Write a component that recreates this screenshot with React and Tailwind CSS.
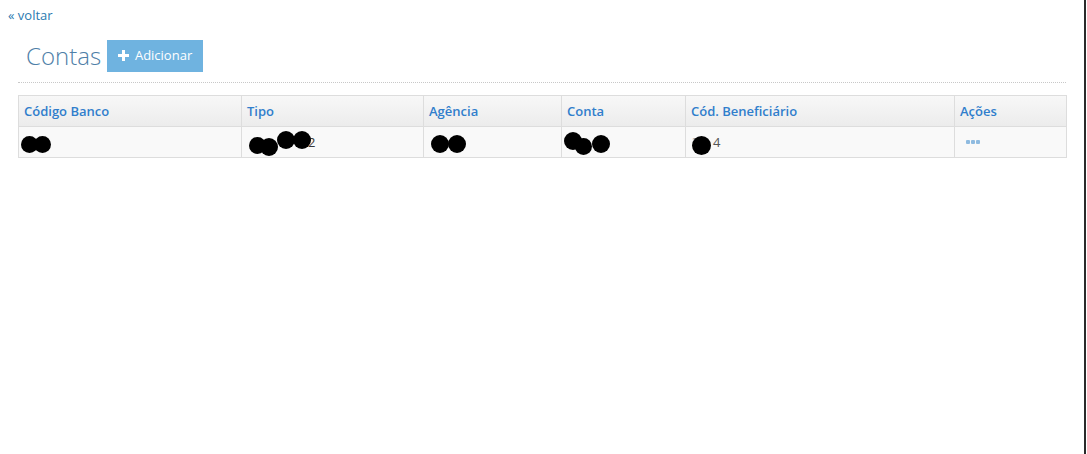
import React from "react";

function Blob({ x, y, s = 18 }) {
  return (
    <span
      className="absolute rounded-full bg-black"
      style={{ left: x, top: y, width: s, height: s }}
    />
  );
}

export default function App() {
  const cols = [
    { label: "Código Banco", w: 223 },
    { label: "Tipo", w: 182 },
    { label: "Agência", w: 138 },
    { label: "Conta", w: 124 },
    { label: "Cód. Beneficiário", w: 269 },
    { label: "Ações", w: 112 },
  ];
  return (
    <div
      className="relative h-[454px] w-[1087px] overflow-hidden bg-white text-[13px] text-[#393939]"
      style={{ fontFamily: '"Open Sans", "Liberation Sans", sans-serif' }}
    >
      <div className="absolute right-[1px] top-0 h-full w-[2px] bg-[#2a2a2a]" />
      <div className="pl-[8px] pt-[6px]">
        <a className="text-[13px] leading-[18px] text-[#2a7ab0]">« voltar</a>
      </div>
      <div className="ml-[18px] mr-[21px]">
        <div className="flex items-center pl-[8px] pt-[14px] pb-[10px]">
          <h1 className="text-[24px] font-light leading-[32px] text-[#4f7fa8]">Contas</h1>
          <button className="ml-[6px] flex h-[32px] w-[96px] items-center justify-center gap-[6px] bg-[#6fb3e0] text-[13px] text-white">
            <svg width="11" height="11" viewBox="0 0 11 11">
              <path d="M4 0h3v4h4v3H7v4H4V7H0V4h4z" fill="white" />
            </svg>
            <span>Adicionar</span>
          </button>
        </div>
        <div className="border-t border-dotted border-[#c8c8c8]" />
        <div className="mt-[12px]">
          <table className="table-fixed border-collapse" style={{ width: 1048 }}>
            <colgroup>
              {cols.map((c) => (
                <col key={c.label} style={{ width: c.w }} />
              ))}
            </colgroup>
            <thead>
              <tr className="h-[31px] bg-gradient-to-b from-[#f8f8f8] to-[#ececec]">
                {cols.map((c) => (
                  <th
                    key={c.label}
                    className="border border-[#dddddd] px-[5px] pt-[2px] text-left align-middle text-[13px] font-semibold text-[#307ecc]"
                  >
                    {c.label}
                  </th>
                ))}
              </tr>
            </thead>
            <tbody>
              <tr className="h-[31px] bg-[#f9f9f9]">
                <td className="relative border border-[#dddddd]">
                  <Blob x={2} y={9} s={17} />
                  <Blob x={15} y={9} s={17} />
                </td>
                <td className="relative border border-[#dddddd]">
                  <span className="absolute left-[66px] top-[6px] text-[#393939]">2</span>
                  <Blob x={7} y={10} s={17} />
                  <Blob x={18} y={11} s={18} />
                  <Blob x={35} y={4} s={18} />
                  <Blob x={51} y={4} s={18} />
                </td>
                <td className="relative border border-[#dddddd]">
                  <Blob x={7} y={8} s={18} />
                  <Blob x={24} y={8} s={18} />
                </td>
                <td className="relative border border-[#dddddd]">
                  <Blob x={2} y={5} s={18} />
                  <Blob x={13} y={11} s={17} />
                  <Blob x={30} y={8} s={18} />
                </td>
                <td className="relative border border-[#dddddd]">
                  <span className="absolute left-[6px] top-[6px] text-[#999]">3</span>
                  <Blob x={6} y={9} s={19} />
                  <span className="absolute left-[27px] top-[6px] text-[#555]">4</span>
                </td>
                <td className="border border-[#dddddd] px-[11px]">
                  <span className="flex gap-[1px]">
                    <span className="h-[4px] w-[4px] rounded-[1px] bg-[#8fbbe0]" />
                    <span className="h-[4px] w-[4px] rounded-[1px] bg-[#8fbbe0]" />
                    <span className="h-[4px] w-[4px] rounded-[1px] bg-[#8fbbe0]" />
                  </span>
                </td>
              </tr>
            </tbody>
          </table>
        </div>
      </div>
    </div>
  );
}
